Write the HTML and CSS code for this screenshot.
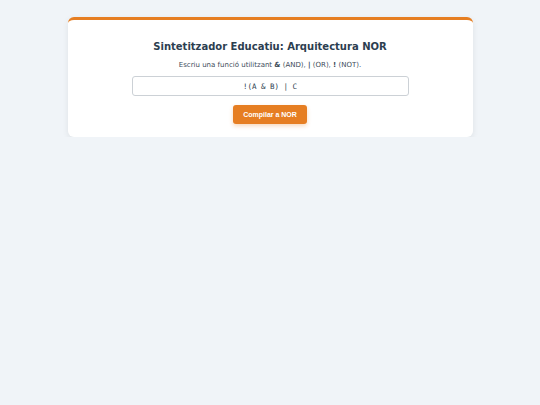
FILE: index.html
```html
<!DOCTYPE html>
<html lang="ca">
<head>
<meta charset="utf-8">
<title>Sintetitzador Educatiu</title>
<link rel="stylesheet" href="styles.css">
</head>
<body>
<main class="card">
  <h1 class="title">Sintetitzador Educatiu: Arquitectura NOR</h1>
  <p class="hint">Escriu una funció utilitzant <b>&amp;</b> (AND), <b>|</b> (OR), <b>!</b> (NOT).</p>
  <input class="expr" type="text" value="!(A &amp; B) | C">
  <button class="compile" type="button">Compilar a NOR</button>
</main>
</body>
</html>
```

FILE: styles.css
```css
html, body {
  margin: 0;
  padding: 0;
}
body {
  background: #f0f4f8;
  font-family: "DejaVu Sans", Verdana, sans-serif;
  color: #2c3e50;
}
.card {
  box-sizing: border-box;
  width: 405px;
  margin: 17px auto 0;
  background: #ffffff;
  border-top: 3px solid #e67e22;
  border-radius: 6px;
  box-shadow: 0 2px 6px rgba(0,0,0,0.08);
  padding: 20px 64px 13px;
  display: flex;
  flex-direction: column;
  align-items: center;
}
.title {
  margin: 0;
  font-size: 10px;
  font-weight: bold;
  line-height: 13px;
  white-space: nowrap;
}
.hint {
  margin: 6px 0 0;
  font-size: 7px;
  line-height: 12px;
  color: #3d4b59;
}
.expr {
  box-sizing: border-box;
  margin-top: 5px;
  width: 277px;
  height: 20px;
  border: 1px solid #ccd1d6;
  border-radius: 3px;
  font-family: "DejaVu Sans Mono", monospace;
  font-size: 7.5px;
  text-align: center;
  color: #2c3e50;
  padding: 0 6px;
}
.compile {
  margin-top: 9px;
  width: 74px;
  height: 19px;
  background: #e67e22;
  color: #ffffff;
  border: none;
  border-radius: 3px;
  font-family: "Liberation Sans", Arial, sans-serif;
  font-weight: bold;
  font-size: 7px;
  box-shadow: 0 2px 4px rgba(230,126,34,0.3);
}
```
